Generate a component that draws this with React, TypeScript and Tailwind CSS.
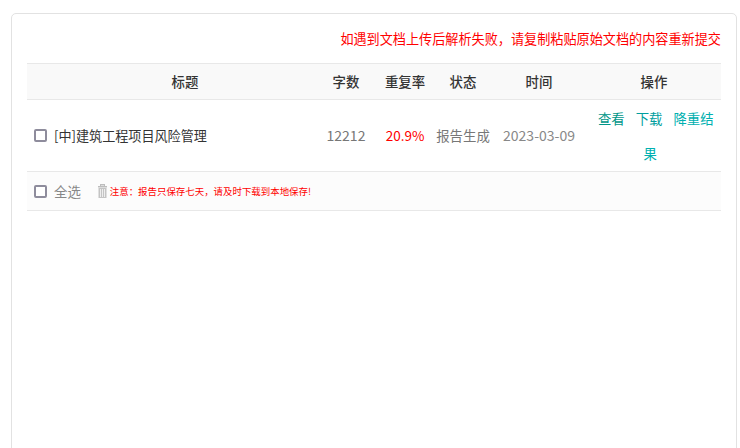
const cjk = "font-['Noto_Sans_CJK_SC','Noto_Sans',sans-serif]";

function Box() {
  return <span className="block w-[13px] h-[13px] shrink-0 rounded-[2px] border-2 border-[#8e8c9c] bg-white" />;
}

function Trash() {
  return (
    <svg width="9" height="14" viewBox="0 0 9 14" className="block shrink-0">
      <rect x="2.5" y="0.5" width="4" height="1.5" fill="none" stroke="#bdbdbd" />
      <rect x="0" y="2" width="9" height="1.5" fill="#bdbdbd" />
      <rect x="0.5" y="4" width="8" height="10" fill="#c4c4c4" />
      <rect x="2" y="5" width="1" height="8" fill="#eeeeee" />
      <rect x="4" y="5" width="1" height="8" fill="#eeeeee" />
      <rect x="6" y="5" width="1" height="8" fill="#eeeeee" />
    </svg>
  );
}

const cols = "grid grid-cols-[290px_58px_60px_56px_96px_134px] items-center";

export default function App() {
  return (
    <div className={`${cjk} h-[448px] w-[740px] overflow-hidden bg-white pt-[13px] pl-[11px]`}>
      <div className="w-[726px] h-[460px] rounded-[5px] border border-[#e2e2e2] px-[15px]">
        <p className="h-[49px] pt-[15px] text-right text-[13.14px] leading-[20px] text-[#ff0000]">
          如遇到文档上传后解析失败，请复制粘贴原始文档的内容重新提交
        </p>

        {/* 表头 */}
        <div className={`${cols} h-[37px] border-y border-[#e8e8e8] bg-[#f9f9f9] text-center text-[13.4px] font-medium text-[#333333]`}>
          <div className="pl-[26px]">标题</div>
          <div>字数</div>
          <div>重复率</div>
          <div>状态</div>
          <div>时间</div>
          <div>操作</div>
        </div>

        {/* 报告行 */}
        <div className={`${cols} h-[72px] border-b border-[#e8e8e8] text-center text-[13.4px]`}>
          <div className="flex items-center gap-[7px] pl-[7px] text-left text-[13.1px] text-[#333333]">
            <Box />
            <span>[中]建筑工程项目风险管理</span>
          </div>
          <div className="text-[14px] text-[#777777]">12212</div>
          <div className="text-[13.5px] text-[#ff0000]">20.9%</div>
          <div className="text-[#777777]">报告生成</div>
          <div className="text-[14px] text-[#888888]">2023-03-09</div>
          <div className="pr-[2px] leading-[35px]">
            <a className="mx-[5.5px] text-[#009688]">查看</a>
            <a className="mx-[5.5px] text-[#009e9e]">下载</a>
            <a className="mx-[5.5px] text-[#00b0b0]">降重结果</a>
          </div>
        </div>

        {/* 底部操作 */}
        <div className="flex h-[39px] items-center border-b border-[#e8e8e8] bg-[#fcfcfc] pl-[7px]">
          <Box />
          <span className="ml-[7px] text-[13.4px] text-[#888888]">全选</span>
          <span className="ml-[17px]"><Trash /></span>
          <span className="ml-[3px] text-[9.45px] text-[#ff0000]">注意：报告只保存七天，请及时下载到本地保存!</span>
        </div>
      </div>
    </div>
  );
}
